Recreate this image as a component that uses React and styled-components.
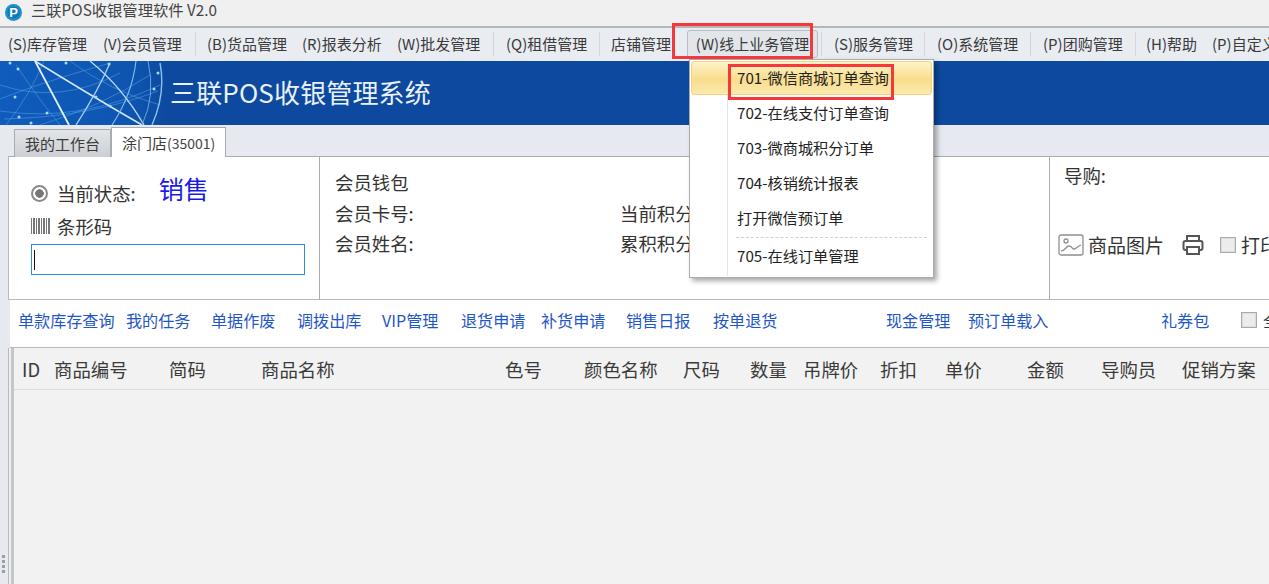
import React from "react";
import styled, { createGlobalStyle } from "styled-components";

const Global = createGlobalStyle`
  html, body { margin: 0; padding: 0; height: 100%; overflow: hidden; }
  body {
    font-family: "Noto Sans CJK SC", "Liberation Sans", sans-serif;
    color: #2b2b2b;
  }
  * { box-sizing: border-box; }
`;

const Page = styled.div`
  width: 1269px;
  height: 584px;
  display: flex;
  flex-direction: column;
  overflow: hidden;
  background: #e6eaf0;
`;

const TitleBar = styled.div`
  height: 28px;
  flex: none;
  display: flex;
  align-items: center;
  gap: 9px;
  padding: 0 0 2px 5px;
  background: #f0f0f0;
  border-bottom: 2px solid #b4b6b8;
  font-size: 15.3px;
  color: #444;
`;

const TitleText = styled.span`
  line-height: 18px;
  margin-bottom: 6px;
`;

const MenuBar = styled.div`
  height: 33px;
  flex: none;
  display: flex;
  align-items: center;
  padding: 0 0 1px 8px;
  background: #e9edf2;
  white-space: nowrap;
  font-size: 15px;
`;

const MenuItem = styled.div`
  position: relative;
  flex: none;
  width: ${({ $w }) => $w}px;
  margin-right: ${({ $gap }) => $gap}px;
  height: 24px;
  line-height: 24px;
  color: #3a3a3a;
  ${({ $open }) =>
    $open &&
    `
    height: 28px;
    text-align: center;
    background: #e2e6ea;
    border: 1px solid #b9bdc2;
    border-radius: 3px;
    line-height: 26px;
  `}
`;

const MenuSep = styled.div`
  width: 1px;
  height: 24px;
  flex: none;
  margin-right: ${({ $gap }) => $gap}px;
  background: #d2d6da;
`;

const RedBox = styled.div`
  position: absolute;
  left: ${({ $x }) => $x}px;
  top: ${({ $y }) => $y}px;
  width: ${({ $w }) => $w}px;
  height: ${({ $h }) => $h}px;
  border: 3px solid #f5393a;
  pointer-events: none;
  z-index: 5;
`;

const Dropdown = styled.div`
  position: absolute;
  left: 1px;
  top: 28px;
  width: 245px;
  height: 219px;
  padding: 1px;
  background: #fff;
  border: 1px solid #a9adb2;
  box-shadow: 3px 3px 5px rgba(0, 0, 0, 0.35);
  z-index: 4;
  color: #222;
  text-align: left;
  line-height: normal;
`;

const Gutter = styled.div`
  position: absolute;
  left: 37px;
  top: 1px;
  bottom: 1px;
  width: 1px;
  background: #e3e6ea;
`;

const DropItem = styled.div`
  position: relative;
  height: ${({ $h }) => $h || 35}px;
  display: flex;
  align-items: center;
  padding: 0 0 2px 46px;
  font-size: 15.2px;
  ${({ $active }) =>
    $active &&
    `
    background: linear-gradient(#fdf3c9, #f9dd8c 55%, #fbe9ae);
    border: 1px solid #f0d486;
    border-radius: 3px;
    padding: 0 0 3px 45px;
  `}
`;

const DropSep = styled.div`
  margin: 2px 5px 2px 45px;
  border-top: 1px dashed #cfd2d5;
`;

const Banner = styled.div`
  height: 64px;
  flex: none;
  display: flex;
  align-items: center;
  background: #0d4a9f;
  overflow: hidden;
`;

const BannerArt = styled.svg`
  width: 165px;
  height: 64px;
  flex: none;
  display: block;
`;

const BannerTitle = styled.div`
  margin: 0 0 4px 5px;
  font-size: 26px;
  color: #e9f1fb;
  letter-spacing: 0.15px;
`;

const Workspace = styled.div`
  flex: 1;
  display: flex;
  flex-direction: column;
  min-height: 0;
  padding-left: 8px;
  position: relative;
`;

const Grip = styled.div`
  position: absolute;
  left: 2px;
  top: 430px;
  display: flex;
  flex-direction: column;
  gap: 2px;
`;

const GripDot = styled.span`
  width: 3px;
  height: 3px;
  background: #9aa0a6;
`;

const TabStrip = styled.div`
  height: 31px;
  flex: none;
  display: flex;
  align-items: flex-end;
  padding-left: 6px;
`;

const Tab = styled.div`
  display: flex;
  align-items: center;
  height: ${({ $active }) => ($active ? 30 : 28)}px;
  width: ${({ $active }) => ($active ? 115 : 97)}px;
  font-size: 15px;
  padding-left: 10px;
  margin-bottom: -1px;
  position: relative;
  z-index: ${({ $active }) => ($active ? 1 : 0)};
  border: 1px solid #a8acb0;
  border-bottom: none;
  background: ${({ $active }) =>
    $active ? "#fff" : "linear-gradient(#e2e5e8, #ccd0d4)"};
  color: #3a3a3a;
`;

const Small = styled.span`
  font-size: 14px;
  color: #444;
`;

const InfoRow = styled.div`
  height: 144px;
  flex: none;
  display: grid;
  grid-template-columns: 311px 730px 1fr;
  background: #fff;
  border-top: 1px solid #a8acb0;
  border-left: 1px solid #b8bbbe;
  font-size: 18.4px;
  color: #333;
`;

const StatusCell = styled.div`
  padding: 21px 0 0 22px;
  border-right: 1px solid #a8acb0;
  display: flex;
  flex-direction: column;
  border-bottom: 1px solid #b8bbbe;
  white-space: nowrap;
`;

const StatusLine = styled.div`
  display: flex;
  align-items: center;
  height: 30px;
`;

const Radio = styled.span`
  width: 17px;
  height: 17px;
  border-radius: 50%;
  border: 2px solid #8a8a8a;
  background: radial-gradient(circle, #777 0 4px, #fff 4.5px);
  margin-right: 9px;
`;

const StatusValue = styled.span`
  font-size: 25px;
  color: #1a1ae6;
  margin-left: 23px;
  margin-top: -10px;
`;

const BarcodeLine = styled.div`
  display: flex;
  align-items: center;
  height: 26px;
  margin-top: 5px;
`;

const BarcodeIcon = styled.svg`
  width: 20px;
  height: 16px;
  margin-right: 6px;
`;

const BarcodeInput = styled.div`
  width: 274px;
  height: 31px;
  margin-top: 5px;
  border: 1px solid #2a8be0;
  padding: 5px 0 0 2px;
`;

const Caret = styled.div`
  width: 1px;
  height: 20px;
  background: #111;
`;

const MemberCell = styled.div`
  padding: 10px 0 0 15px;
  border-right: 1px solid #a8acb0;
  border-bottom: 1px solid #b8bbbe;
  display: grid;
  grid-template-columns: 285px 1fr;
  grid-auto-rows: 30.5px;
  align-items: center;
  white-space: nowrap;
`;

const Wide = styled.div`
  grid-column: 1 / 3;
`;

const GuideCell = styled.div`
  padding: 6px 0 0 8px;
  border-bottom: 1px solid #b8bbbe;
  white-space: nowrap;
  overflow: hidden;
`;

const GuideLabel = styled.div`
  margin-left: 6px;
  height: 24px;
  line-height: 24px;
`;

const ToolLine = styled.div`
  display: flex;
  align-items: center;
  margin-top: 44px;
  font-size: 19px;
`;

const GrayIcon = styled.svg`
  flex: none;
  margin-left: ${({ $before }) => $before || 0}px;
  margin-right: ${({ $gap }) => $gap}px;
`;

const CheckBox = styled.span`
  flex: none;
  width: 16px;
  height: 16px;
  border: 1px solid #aaa;
  outline: 1px solid #ddd;
  outline-offset: -2px;
  background: #ececec;
  margin-right: 5px;
`;

const LinkBar = styled.div`
  height: 48px;
  flex: none;
  margin-left: 2px;
  display: flex;
  align-items: center;
  padding: 0 0 7px 8px;
  background: #fff;
  border-bottom: 1px solid #b8bbbe;
  white-space: nowrap;
  font-size: 16.1px;
  color: #1f56c8;
`;

const BarLink = styled.span`
  flex: none;
  width: ${({ $w }) => $w}px;
`;

const SelectAll = styled.span`
  margin-left: 1px;
  color: #333;
`;

const Table = styled.div`
  flex: 1;
  margin-left: 0;
  padding-left: 2px;
  background: #eef0f3;
  border-left: 1px solid #b8bbbe;
  display: flex;
`;

const TableInner = styled.div`
  flex: 1;
  background: #f2f2f2;
  border-left: 3px solid #c4c7ca;
`;

const TableHead = styled.div`
  height: 42px;
  display: grid;
  grid-template-columns: 32px 115px 92px 244px 79px 99px 67px 53px 77px 65px 82px 74px 81px 90px;
  align-items: center;
  padding-left: 8px;
  border-bottom: 1px solid #dcdcdc;
  font-size: 18.4px;
  color: #3a3a3a;
  white-space: nowrap;
`;

const menu = [
  { t: "(S)库存管理", w: 79, gap: 16 },
  { t: "(V)会员管理", w: 79, gap: 13 },
  { sep: 11 },
  { t: "(B)货品管理", w: 79, gap: 16 },
  { t: "(R)报表分析", w: 79, gap: 16 },
  { t: "(W)批发管理", w: 84, gap: 12 },
  { sep: 12 },
  { t: "(Q)租借管理", w: 82, gap: 11 },
  { sep: 11 },
  { t: "店铺管理", w: 60, gap: 16 },
  { open: true, t: "(W)线上业务管理", w: 131, gap: 3 },
  { sep: 12 },
  { t: "(S)服务管理", w: 78, gap: 12 },
  { sep: 12 },
  { t: "(O)系统管理", w: 81, gap: 12 },
  { sep: 12 },
  { t: "(P)团购管理", w: 78, gap: 14 },
  { sep: 10 },
  { t: "(H)帮助", w: 50, gap: 16 },
  { t: "(P)自定义", w: 80, gap: 0 },
];

const links = [
  ["单款库存查询", 108],
  ["我的任务", 85],
  ["单据作废", 86],
  ["调拨出库", 85],
  ["VIP管理", 79],
  ["退货申请", 80],
  ["补货申请", 85],
  ["销售日报", 87],
  ["按单退货", 173],
  ["现金管理", 82],
  ["预订单载入", 193],
  ["礼券包", 80],
];

const columns = [
  "ID", "商品编号", "简码", "商品名称", "色号", "颜色名称", "尺码",
  "数量", "吊牌价", "折扣", "单价", "金额", "导购员", "促销方案",
];

// banner globe: bright strands first, then the faint mesh behind them
const strands = [
  { d: "M35 0 L69 64", w: 1.8, c: "#e4f2ff" },
  { d: "M35 0 Q90 34 142 64", w: 1.6, c: "#d4eafc" },
  { d: "M90 0 Q122 26 144 64", w: 1.3, c: "#b5dbf8" },
  { d: "M110 2 Q98 30 76 64", w: 1.3, c: "#a6d3f6" },
  { d: "M136 0 Q132 34 112 64", w: 1.1, c: "#86bfee" },
  { d: "M160 2 Q166 32 152 64", w: 1.4, c: "#8ac3f0" },
  { d: "M148 0 Q156 34 142 64", w: 0.9, c: "#6fb0e8" },
];
const mesh = [
  "M0 50 Q80 62 160 24",
  "M4 58 Q90 56 158 30",
  "M0 24 Q60 44 120 12",
  "M16 4 Q40 40 60 64",
  "M0 38 Q40 22 110 2",
  "M6 64 Q30 34 44 0",
  "M40 64 Q100 46 150 14",
  "M70 0 Q110 30 160 44",
];
const sparks = [
  [10, 2], [18, 8], [15, 36], [19, 56], [31, 62], [66, 2], [109, 3],
  [154, 28], [110, 45], [96, 36], [47, 52], [158, 12],
];

const App = () => (
  <Page>
    <Global />
    <TitleBar>
      <svg width="17" height="17" viewBox="0 0 17 17">
        <circle cx="8.5" cy="8.5" r="8.5" fill="#1b8fc9" />
        <circle cx="8.5" cy="8.5" r="6" fill="#0f7ab4" />
        <text x="8.5" y="13" textAnchor="middle" fontSize="13" fontWeight="700" fill="#fff" fontFamily="Liberation Sans">P</text>
      </svg>
      <TitleText>三联POS收银管理软件 V2.0</TitleText>
    </TitleBar>
    <MenuBar>
      {menu.map((m, i) =>
        m.sep ? (
          <MenuSep key={i} $gap={m.sep} />
        ) : (
          <MenuItem key={i} $w={m.w} $gap={m.gap} $open={m.open}>
            {m.t}
            {m.open && (
              <>
                <RedBox $x={-16} $y={-8} $w={141} $h={36} />
                <Dropdown>
                  <Gutter />
                  <DropItem $active $h={34}>701-微信商城订单查询</DropItem>
                  <DropItem>702-在线支付订单查询</DropItem>
                  <DropItem>703-微商城积分订单</DropItem>
                  <DropItem>704-核销统计报表</DropItem>
                  <DropItem>打开微信预订单</DropItem>
                  <DropSep />
                  <DropItem $h={32}>705-在线订单管理</DropItem>
                  <RedBox $x={38} $y={4} $w={166} $h={36} />
                </Dropdown>
              </>
            )}
          </MenuItem>
        )
      )}
    </MenuBar>
    <Banner>
      <BannerArt viewBox="0 0 165 64">
        <defs>
          <linearGradient id="glow" x1="0" x2="1" y1="0" y2="0">
            <stop offset="0" stopColor="#0f5cbc" />
            <stop offset="0.8" stopColor="#0e55b0" />
            <stop offset="1" stopColor="#0d4a9f" />
          </linearGradient>
        </defs>
        <rect width="165" height="64" fill="url(#glow)" />
        {mesh.map((d) => (
          <path key={d} d={d} fill="none" stroke="#4f9be0" strokeWidth="0.8" opacity="0.75" />
        ))}
        {strands.map((s) => (
          <path key={s.d} d={s.d} fill="none" stroke={s.c} strokeWidth={s.w} />
        ))}
        {sparks.map(([x, y]) => (
          <circle key={`${x}-${y}`} cx={x} cy={y} r="1.5" fill="#a9d6f7" />
        ))}
      </BannerArt>
      <BannerTitle>三联POS收银管理系统</BannerTitle>
    </Banner>
    <Workspace>
      <Grip>
        <GripDot /><GripDot /><GripDot /><GripDot />
      </Grip>
      <TabStrip>
        <Tab>我的工作台</Tab>
        <Tab $active>涂门店<Small>(35001)</Small></Tab>
      </TabStrip>
      <InfoRow>
        <StatusCell>
          <StatusLine>
            <Radio />
            当前状态:
            <StatusValue>销售</StatusValue>
          </StatusLine>
          <BarcodeLine>
            <BarcodeIcon viewBox="0 0 20 16">
              {[0, 2, 3, 5, 7, 8, 10, 12, 13, 15, 17, 18].map((x) => (
                <rect key={x} x={x} y="0" width="1" height="16" fill="#777" />
              ))}
            </BarcodeIcon>
            条形码
          </BarcodeLine>
          <BarcodeInput>
            <Caret />
          </BarcodeInput>
        </StatusCell>
        <MemberCell>
          <Wide>会员钱包</Wide>
          <div>会员卡号:</div>
          <div>当前积分:</div>
          <div>会员姓名:</div>
          <div>累积积分:</div>
        </MemberCell>
        <GuideCell>
          <GuideLabel>导购:</GuideLabel>
          <ToolLine>
            <GrayIcon $gap={4} width="26" height="22" viewBox="0 0 26 22" fill="none" stroke="#8f8f8f" strokeWidth="1.3">
              <rect x="1" y="1" width="24" height="20" rx="2" />
              <circle cx="8" cy="7" r="2" />
              <path d="M3 17c4 0 5-5 8-5s3 3 5 3 4-3 7-4" />
            </GrayIcon>
            商品图片
            <GrayIcon $before={18} $gap={16} width="22" height="22" viewBox="0 0 22 22" fill="none" stroke="#555" strokeWidth="2">
              <path d="M5 7V2h12v5" />
              <rect x="1.5" y="7" width="19" height="9" rx="2" />
              <rect x="5" y="13" width="12" height="7" fill="#fff" />
            </GrayIcon>
            <CheckBox />
            打印
          </ToolLine>
        </GuideCell>
      </InfoRow>
      <LinkBar>
        {links.map(([t, w]) => (
          <BarLink key={t} $w={w}>{t}</BarLink>
        ))}
        <CheckBox />
        <SelectAll>全</SelectAll>
      </LinkBar>
      <Table>
        <TableInner>
          <TableHead>
            {columns.map((c) => (
              <div key={c}>{c}</div>
            ))}
          </TableHead>
        </TableInner>
      </Table>
    </Workspace>
  </Page>
);

export default App;
